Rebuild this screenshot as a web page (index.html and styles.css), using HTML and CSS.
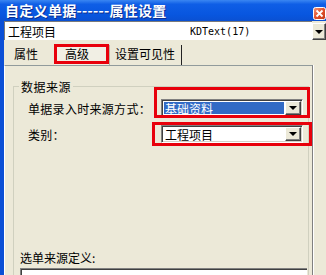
FILE: index.html
```html
<!DOCTYPE html>
<html lang="zh-CN">
<head>
  <meta charset="UTF-8">
  <title>自定义单据------属性设置</title>
  <link rel="stylesheet" href="styles.css">
</head>
<body>
  <div class="dialog">
    <div class="titlebar">
      <span class="title">自定义单据------属性设置</span>
      <span class="close-btn">
        <svg width="13" height="13" viewBox="0 0 13 13">
          <defs>
            <linearGradient id="closeFill" x1="0" y1="0" x2="1" y2="1">
              <stop offset="0" stop-color="#F39A7C"/>
              <stop offset="0.5" stop-color="#E1502B"/>
              <stop offset="1" stop-color="#C23A1A"/>
            </linearGradient>
          </defs>
          <rect x="0.5" y="0.5" width="12" height="12" rx="2" fill="url(#closeFill)" stroke="#fff"/>
          <path d="M3.5 3.5 L9.5 9.5 M9.5 3.5 L3.5 9.5" stroke="#fff" stroke-width="1.8"/>
        </svg>
      </span>
    </div>

    <div class="frame">
      <div class="object-select">
        <div class="object-field">
          <span class="object-name">工程项目</span>
          <span class="object-type">KDText(17)</span>
        </div>
        <span class="drop-btn"><i class="arrow"></i></span>
      </div>

      <div class="tabs">
        <div class="tab">属性</div>
        <div class="tab active"><span class="mark"></span>高级</div>
        <div class="tab last">设置可见性</div>
      </div>

      <div class="panel">
        <fieldset class="group">
          <legend>数据来源</legend>

          <div class="field-row first">
            <label>单据录入时来源方式：</label>
            <div class="combo">
              <span class="mark mark-source"></span>
              <span class="combo-value selected">基础资料</span>
              <span class="drop-btn"><i class="arrow"></i></span>
            </div>
          </div>

          <div class="field-row">
            <label>类别：</label>
            <div class="combo">
              <span class="mark mark-kind"></span>
              <span class="combo-value">工程项目</span>
              <span class="drop-btn"><i class="arrow"></i></span>
            </div>
          </div>

          <div class="source-def">选单来源定义:</div>
          <div class="source-box"></div>
        </fieldset>
      </div>
    </div>
  </div>
</body>
</html>
```

FILE: styles.css
```css
body {
  margin: 0;
  font-family: "Noto Sans CJK SC", "Noto Sans", sans-serif;
  font-size: 12px;
  color: #000;
  background-color: #ECE9D8;
}

.dialog {
  width: 326px;
  height: 275px;
  overflow: hidden;
  display: flex;
  flex-direction: column;
  background-color: #ECE9D8;
}

/* title bar */
.titlebar {
  flex: none;
  height: 21px;
  display: flex;
  justify-content: space-between;
  padding-left: 5px;
  background: linear-gradient(to bottom, #3A86F2 0%, #0F5EE6 20%, #0856DF 70%, #0A50D2 100%);
}

.title {
  color: #fff;
  font-weight: bold;
  font-size: 14px;
  letter-spacing: 0.3px;
  line-height: 21px;
  text-shadow: 1px 1px #0B2E90;
}

.close-btn {
  width: 13px;
  height: 13px;
  margin-top: 7px;
}

.close-btn svg {
  display: block;
}

/* window body */
.frame {
  flex: 1;
  min-height: 0;
  display: flex;
  flex-direction: column;
  border-left: 4px solid #0B4FD6;
}

.object-select {
  flex: none;
  height: 19px;
  display: flex;
}

.object-field {
  flex: 1;
  display: flex;
  align-items: center;
  padding-left: 3px;
  background-color: #fff;
  border-top: 1px solid #7A7A7A;
  border-left: 1px solid #7A7A7A;
}

.object-name {
  width: 182px;
  line-height: 17px;
}

.object-type {
  font-family: "DejaVu Sans Mono", "Liberation Mono", monospace;
  font-size: 10px;
}

.object-select .drop-btn {
  width: 14px;
  margin-top: 2px;
}

.drop-btn {
  flex: none;
  display: flex;
  align-items: center;
  justify-content: center;
  background-color: #ECE9D8;
  border-top: 1px solid #fff;
  border-left: 1px solid #fff;
  border-right: 1px solid #404040;
  border-bottom: 1px solid #404040;
  box-shadow: inset -1px -1px #808080;
  box-sizing: border-box;
}

.arrow {
  width: 0;
  height: 0;
  border-left: 4px solid transparent;
  border-right: 4px solid transparent;
  border-top: 4px solid #000;
}

/* tabs */
.tabs {
  flex: none;
  height: 25px;
  display: flex;
  align-items: flex-end;
}

.tab {
  position: relative;
  height: 20px;
  line-height: 18px;
  box-sizing: border-box;
}

.tab:first-child {
  width: 50px;
  padding-left: 10px;
}

.tab.active {
  width: 55px;
  padding-left: 11px;
  background-color: #F1EFE4;
  box-shadow: 1px 0 #B9B5A3;
}

.tab.last {
  width: 73px;
  padding-left: 6px;
  border-right: 1px solid #222;
}

.mark {
  position: absolute;
  border: 3px solid #E8000B;
  pointer-events: none;
}

.tab .mark {
  top: -1px;
  bottom: 1px;
  left: 0;
  right: 0;
}

/* tab page */
.panel {
  flex: 1;
  min-height: 0;
  margin-right: 13px;
  padding: 12px 3px 0 8px;
  border-top: 1px solid #919B9C;
  border-left: 1px solid #fff;
  border-right: 1px solid #808080;
  box-shadow: 1px 0 #fff;
}

.group {
  margin: 0;
  padding: 0 0 0 6px;
  border: 1px solid #D0D0BF;
  min-height: 300px;
}

.group legend {
  margin-left: -1px;
  padding: 0 2px;
  line-height: 17px;
  letter-spacing: 0.5px;
}

.field-row {
  display: flex;
  align-items: center;
  padding-left: 8px;
  margin-top: 8px;
}

.field-row.first {
  margin-top: 4px;
}

.field-row label {
  width: 133px;
  letter-spacing: 0.3px;
}

.combo {
  position: relative;
  width: 142px;
  height: 18px;
  display: flex;
  padding: 1px;
  box-sizing: border-box;
  background-color: #fff;
  border-top: 1px solid #808080;
  border-left: 1px solid #808080;
  border-right: 1px solid #fff;
  border-bottom: 1px solid #fff;
  box-shadow: inset 1px 1px #404040, inset -1px -1px #D4D0C8;
}

.combo-value {
  flex: 1;
  margin: 1px;
  padding-left: 1px;
  line-height: 14px;
}

.combo-value.selected {
  background-color: #316AC5;
  color: #fff;
}

.combo .drop-btn {
  width: 16px;
}

.mark-source {
  top: -13px;
  bottom: -2px;
  left: -8px;
  right: -8px;
}

.mark-kind {
  top: -4px;
  bottom: -4px;
  left: -10px;
  right: -10px;
}

.source-def {
  margin-top: 106px;
  line-height: 17px;
}

.source-box {
  margin-top: 2px;
  height: 20px;
  border-top: 1px solid #808080;
  border-left: 1px solid #808080;
  box-shadow: inset 1px 1px #404040;
  background-color: #fff;
  margin-right: 1px;
}
```
